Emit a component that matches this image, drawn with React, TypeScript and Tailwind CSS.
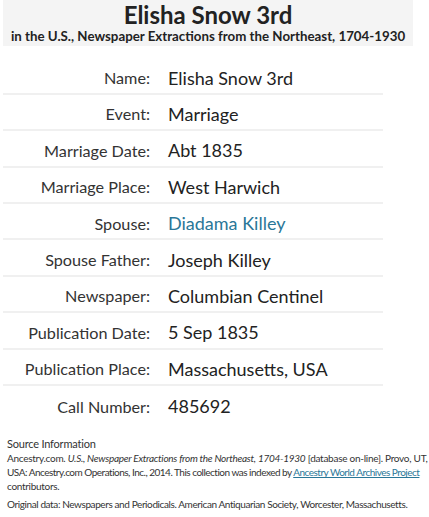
const rows: { label: string; value: string; link?: boolean }[] = [
  { label: 'Name:', value: 'Elisha Snow 3rd' },
  { label: 'Event:', value: 'Marriage' },
  { label: 'Marriage Date:', value: 'Abt 1835' },
  { label: 'Marriage Place:', value: 'West Harwich' },
  { label: 'Spouse:', value: 'Diadama Killey', link: true },
  { label: 'Spouse Father:', value: 'Joseph Killey' },
  { label: 'Newspaper:', value: 'Columbian Centinel' },
  { label: 'Publication Date:', value: '5 Sep 1835' },
  { label: 'Publication Place:', value: 'Massachusetts, USA' },
  { label: 'Call Number:', value: '485692' },
];

export default function App() {
  return (
    <div className="h-[517px] w-[429px] overflow-hidden bg-white font-['Lato',sans-serif] text-[#333]">
      <div className="mx-[3px] h-[46px] w-[410px] bg-[#f4f4f4] pt-[1px] text-center text-[#222]">
        <h1 className="text-[24px] font-bold leading-[28px]">Elisha Snow 3rd</h1>
        <p className="text-[13.3px] font-bold leading-[15px]">
          in the U.S., Newspaper Extractions from the Northeast, 1704-1930
        </p>
      </div>

      <div className="mt-[12.5px] ml-[3px] w-[380px]">
        {rows.map((row, i) => (
          <div
            key={row.label}
            className={`flex h-[36.4px] items-center pt-[5px] ${
              i < rows.length - 1 ? 'border-b-2 border-[#f0f0f0]' : ''
            }`}
          >
            <div className="w-[147px] text-right text-[16.2px] text-[#333]">{row.label}</div>
            <div
              className={`ml-[18px] text-[18px] ${row.link ? 'text-[#2a7798]' : 'text-[#222]'}`}
            >
              {row.value}
            </div>
          </div>
        ))}
      </div>

      <div className="mt-[14px] whitespace-nowrap px-[7px] text-[10px] leading-[14px] text-[#333]">
        <div className="text-[11px] leading-[15px] tracking-[-0.2px]">Source Information</div>
        <div>
          <div className="tracking-[-0.27px]">
            Ancestry.com. <i>U.S., Newspaper Extractions from the Northeast, 1704-1930</i> [database
            on-line]. Provo, UT,
          </div>
          <div className="tracking-[-0.5px]">
            USA: Ancestry.com Operations, Inc., 2014. This collection was indexed by{' '}
            <a href="#" className="text-[#2a7798] underline">
              Ancestry World Archives Project
            </a>
          </div>
          <div className="tracking-[-0.3px]">contributors.</div>
        </div>
        <p className="mt-[4px] tracking-[-0.4px]">
          Original data: Newspapers and Periodicals. American Antiquarian Society, Worcester,
          Massachusetts.
        </p>
      </div>
    </div>
  );
}
